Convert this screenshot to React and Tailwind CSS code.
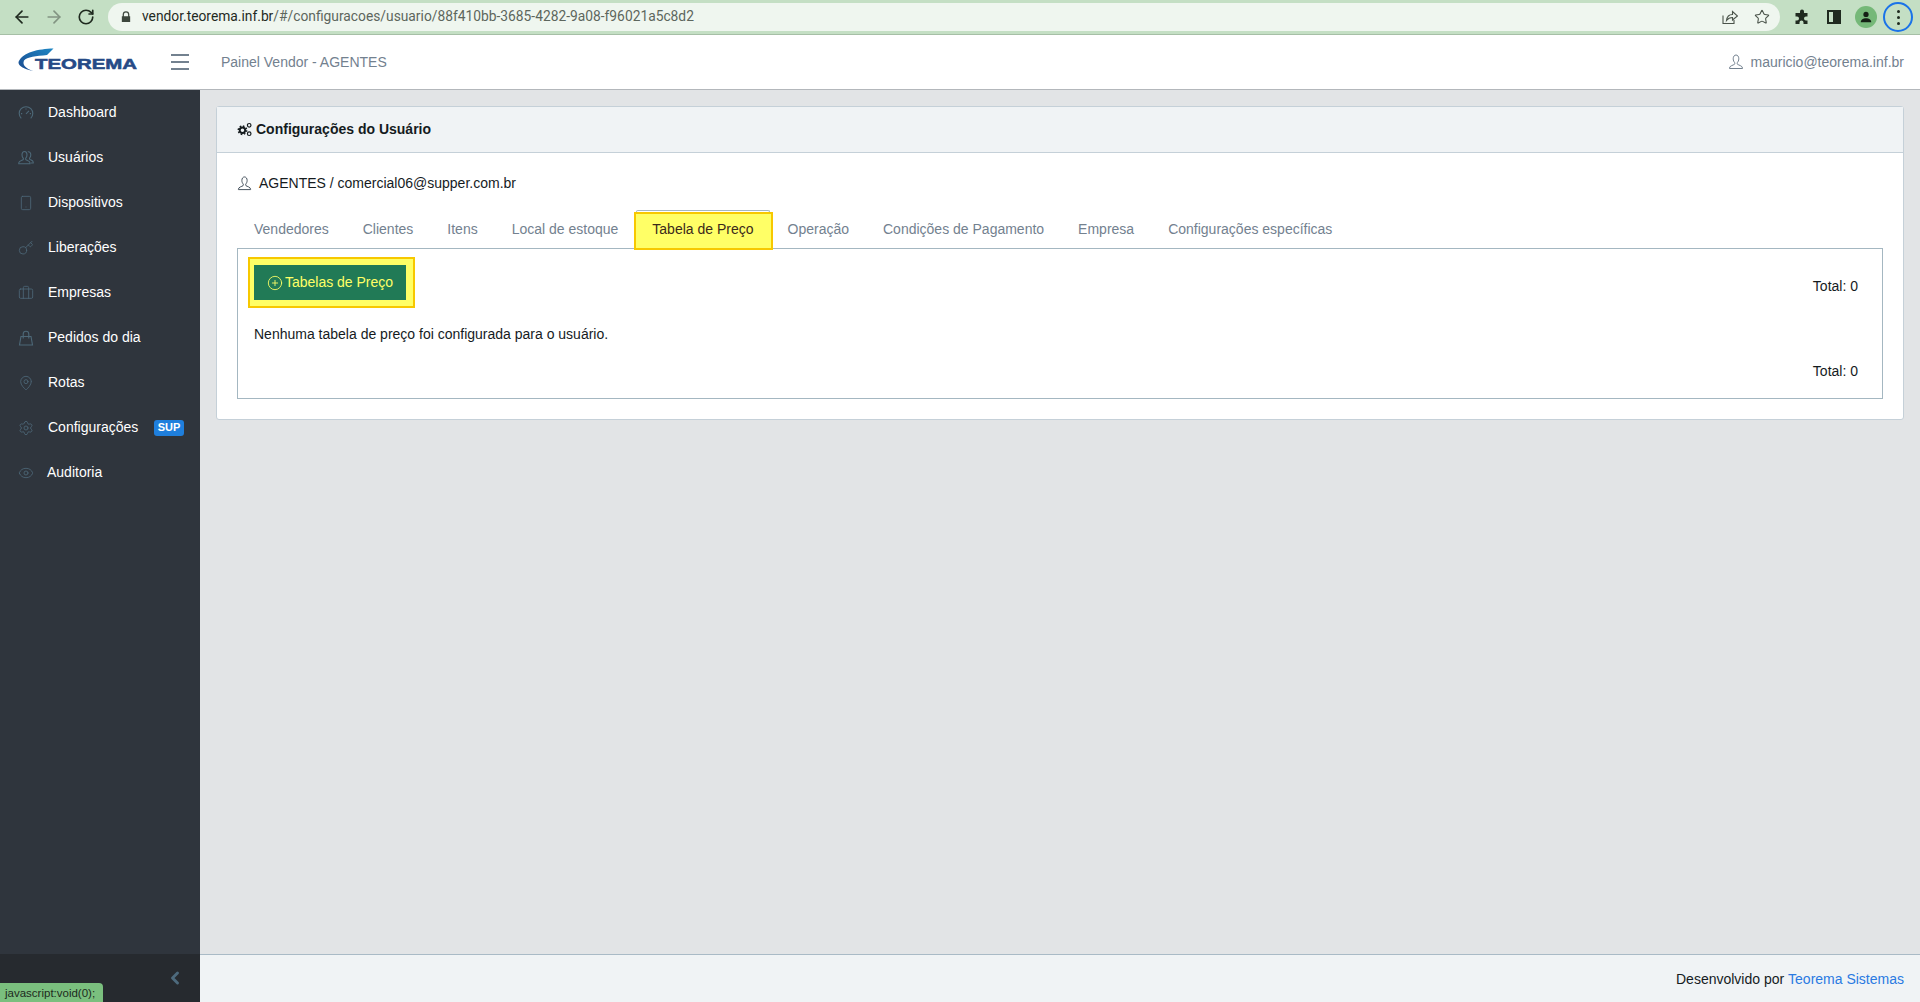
import { ArrowLeft, ArrowRight, RotateCw, Star, ChevronLeft, CirclePlus, Smartphone, Key, Briefcase, MapPin, Settings, Eye } from "lucide-react";

const UserLine = ({ className }) => (
  <svg viewBox="0 0 16 16" fill="none" stroke="currentColor" strokeWidth="1" className={className}>
    <path d="M5.2 4.8C5.2 2.6 6.3 1 8 1s2.8 1.6 2.8 3.8c0 1.6-.7 3-1.4 3.7-.3.3-.3 1.5.2 1.9.9.6 4.9 1.5 4.9 3.6v.5H1.5V14c0-2.1 4-3 4.9-3.6.5-.4.5-1.6.2-1.9-.7-.7-1.4-2.1-1.4-3.7z" />
  </svg>
);

const PeopleLine = ({ className }) => (
  <svg viewBox="0 0 16 16" fill="none" stroke="currentColor" strokeWidth="1.1" className={className}>
    <path d="M4 4.8C4 2.7 5 1.5 6.5 1.5S9 2.7 9 4.8c0 1.5-.6 2.7-1.2 3.3-.3.3-.2 1.3.2 1.7.8.6 4 1.2 4 3v1H.8v-1c0-1.8 3.3-2.4 4.2-3 .4-.4.5-1.400.2-1.700C4.600 7.500 4 6.300 4 4.800z" />
    <path d="M9.800 1.800c1.600-.5 3 .8 3 3 0 1.400-.5 2.500-1.100 3.100-.3.300-.2 1.200.2 1.500.7.500 3.300 1 3.300 2.700v.9h-2.200" />
  </svg>
);

const GaugeLine = ({ className }) => (
  <svg viewBox="0 0 16 16" fill="none" stroke="currentColor" strokeWidth="1.1" className={className}>
    <path d="M3.300 13.400A6.800 6.800 0 1 1 12.700 13.400" />
    <path d="M8 8.800L11 5.800" />
    <path d="M8 3.400V4.600M3 8.600H4.200M11.800 8.600H13" />
  </svg>
);

const BagLine = ({ className }) => (
  <svg viewBox="0 0 16 16" fill="none" stroke="currentColor" strokeWidth="1.1" className={className}>
    <path d="M3 6.500H13L14.500 15H1.500Z" />
    <path d="M5.200 8.500V4a2.800 2.800 0 0 1 5.600 0V8.500" />
  </svg>
);

const Cogs = ({ className }) => (
  <svg viewBox="0 0 16 16" className={className} fill="none" stroke="currentColor">
    <circle cx="5.8" cy="8.8" r="2.9" strokeWidth="2" />
    <circle cx="5.8" cy="8.8" r="4.4" strokeWidth="1.7" strokeDasharray="1.7 1.75" />
    <circle cx="13" cy="3.5" r="1.9" strokeWidth="1.3" />
    <circle cx="13" cy="12.5" r="1.9" strokeWidth="1.3" />
  </svg>
);

const Logo = () => (
  <svg viewBox="0 0 122 26" className="w-[122px] h-[26px]">
    <defs>
      <linearGradient id="swoosh" x1="0" y1="1" x2="1" y2="0">
        <stop offset="0" stopColor="#1b4a8f" />
        <stop offset="1" stopColor="#1c86c4" />
      </linearGradient>
    </defs>
    <path d="M35.5 .5C20 1 5 4 .5 14C0 18 7 21.5 15 23C8 20.5 4 17 6 12.5C9 9 18 8 29 7Z" fill="url(#swoosh)" />
    <text x="17" y="21" textLength="102" lengthAdjust="spacingAndGlyphs" fontFamily="Liberation Sans, sans-serif" fontWeight="700" fontSize="14" fill="#264a86" stroke="#264a86" strokeWidth="0.5">TEOREMA</text>
  </svg>
);

const navItems = [
  { label: "Dashboard", icon: <GaugeLine className="w-[16px] h-[16px]" /> },
  { label: "Usuários", icon: <PeopleLine className="w-[16px] h-[16px]" /> },
  { label: "Dispositivos", icon: <Smartphone size={16} strokeWidth={1.25} /> },
  { label: "Liberações", icon: <Key size={16} strokeWidth={1.25} /> },
  { label: "Empresas", icon: <Briefcase size={16} strokeWidth={1.25} /> },
  { label: "Pedidos do dia", icon: <BagLine className="w-[16px] h-[16px]" /> },
  { label: "Rotas", icon: <MapPin size={16} strokeWidth={1.25} /> },
  { label: "Configurações", icon: <Settings size={16} strokeWidth={1.25} />, badge: "SUP" },
  { label: "Auditoria", icon: <Eye size={16} strokeWidth={1.25} />, tight: true },
];

const tabs = ["Vendedores", "Clientes", "Itens", "Local de estoque", "Tabela de Preço", "Operação", "Condições de Pagamento", "Empresa", "Configurações específicas"];

const BrowserBar = () => (
  <div className="h-[35px] shrink-0 bg-[#c4dfc4] border-b border-[#a6bfa6] flex items-center font-['Roboto',sans-serif]">
    <div className="w-[108px] shrink-0 flex items-center pl-[6px] text-[#1f2a1f]">
      <span className="w-[32px] flex justify-center"><ArrowLeft size={20} strokeWidth={2} /></span>
      <span className="w-[32px] flex justify-center"><ArrowRight size={20} strokeWidth={2} className="text-[#829482]" /></span>
      <span className="w-[32px] flex justify-center"><RotateCw size={18} strokeWidth={2.2} /></span>
    </div>
    <div className="w-[1672px] h-[28px] mb-px rounded-full bg-[#eff6ef] flex items-center pl-[13px] pr-[2px]">
      <svg viewBox="0 0 12 14" className="w-[10px] h-[12px] shrink-0" fill="#3c463c">
        <path d="M2 6V4a4 4 0 0 1 8 0v2h1v7H1V6zm1.5 0h5V4a2.5 2.5 0 0 0-5 0z" />
      </svg>
      <span className="ml-[11px] text-[13.8px] text-[#1f2a1f]">vendor.teorema.inf.br<span className="text-[#5d665d]">/#/configuracoes/usuario/88f410bb-3685-4282-9a08-f96021a5c8d2</span></span>
      <div className="ml-auto flex items-center text-[#4a534a]">
        <span className="w-[32px] flex justify-center">
          <svg viewBox="0 0 16 16" fill="none" stroke="currentColor" strokeWidth="1.1" className="w-[16px] h-[16px]">
            <path d="M1 6.5V14.500H12V11" />
            <path d="M4.500 11.500C5 7.500 7.500 5.500 10.500 5.500V2.500L15.500 7L10.500 11V8.500C8 8.500 6 9.500 4.500 11.500z" />
          </svg>
        </span>
        <span className="w-[32px] flex justify-center"><Star size={16} strokeWidth={1.6} /></span>
      </div>
    </div>
    <div className="flex-1 flex items-center pl-[6px]">
      <span className="w-[32px] flex justify-center">
        <svg viewBox="0 0 16 16" className="w-[16px] h-[16px]" fill="#1f2a1f">
          <path d="M6 2.500a2 2 0 0 1 4 0V4h3.500v3.500H12a2 2 0 0 0 0 4h1.500V15H9.500v-1.500a2 2 0 0 0-4 0V15H1.500v-3.500H3a2 2 0 0 0 0-4H1.500V4H6z" />
        </svg>
      </span>
      <span className="w-[32px] flex justify-center">
        <span className="w-[14px] h-[14px] border-2 border-[#1f2a1f] flex justify-end">
          <span className="w-[6px] bg-[#1f2a1f]" />
        </span>
      </span>
      <span className="w-[32px] flex justify-center">
        <span className="w-[22px] h-[22px] rounded-full bg-[#75b878] flex items-center justify-center">
          <svg viewBox="0 0 16 16" className="w-[14px] h-[14px]" fill="#142014">
            <circle cx="8" cy="5" r="3" />
            <path d="M2 14c0-3 3-4.500 6-4.500s6 1.500 6 4.500z" />
          </svg>
        </span>
      </span>
      <span className="w-[32px] flex justify-center">
        <span className="w-[30px] h-[30px] rounded-full border-2 border-[#1a73e8] flex flex-col items-center justify-center gap-[3px]">
          <span className="w-[3px] h-[3px] rounded-full bg-[#1f2a1f]" />
          <span className="w-[3px] h-[3px] rounded-full bg-[#1f2a1f]" />
          <span className="w-[3px] h-[3px] rounded-full bg-[#1f2a1f]" />
        </span>
      </span>
    </div>
  </div>
);

const Header = () => (
  <header className="h-[55px] shrink-0 bg-white border-b border-[#b3b7bb] flex items-center text-[14px] text-[#73818f]">
    <div className="w-[171px] shrink-0 pl-[18px] pb-[2px]">
      <Logo />
    </div>
    <div className="w-[18px] flex flex-col gap-[5px]">
      <span className="h-[2px] bg-[#73818f]" />
      <span className="h-[2px] bg-[#73818f]" />
      <span className="h-[2px] bg-[#73818f]" />
    </div>
    <span className="ml-[32px]">Painel Vendor - AGENTES</span>
    <div className="ml-auto pr-[16px] flex items-center">
      <UserLine className="w-[16px] h-[16px] mr-[7px]" />
      <span>mauricio@teorema.inf.br</span>
    </div>
  </header>
);

const Sidebar = () => (
  <aside className="w-[200px] shrink-0 bg-[#2f353d] flex flex-col relative">
    <nav className="flex-1">
      {navItems.map((item) => (
        <div key={item.label} className="h-[45px] flex items-center pl-[18px] text-[14px] text-white">
          <span className={`${item.tight ? "w-[29px]" : "w-[30px]"} text-[#4d6878] flex`}>{item.icon}</span>
          <span>{item.label}</span>
          {item.badge && (
            <span className="ml-auto mr-[16px] w-[30px] h-[16px] rounded-[3px] bg-[#1f7fdd] text-[11px] font-bold flex items-center justify-center">{item.badge}</span>
          )}
        </div>
      ))}
    </nav>
    <div className="h-[48px] bg-[#262a2f] flex items-center justify-end pr-[15px]">
      <ChevronLeft size={20} strokeWidth={3.5} className="text-[#4d6a7d]" />
    </div>
    <div className="absolute left-0 bottom-0 w-[103px] h-[19px] bg-[#7abf7e] rounded-tr-[4px] text-[11.5px] leading-[19px] pl-[5px] pt-[1px] text-[#1d2a1d]">javascript:void(0);</div>
  </aside>
);

const Card = () => (
  <div className="mx-[16px] mt-[16px] bg-white border border-[#c5d0d8] rounded-[3px]">
    <div className="h-[46px] bg-[#f0f3f5] border-b border-[#c5d0d8] flex items-center pl-[20px] text-[14px] font-bold text-[#151b1e]">
      <Cogs className="w-[15px] h-[15px] mr-[4px]" />
      <span>Configurações do Usuário</span>
    </div>
    <div className="px-[20px] pt-[20px] pb-[20px] text-[14px] text-[#151b1e]">
      <div className="h-[21px] flex items-center">
        <UserLine className="w-[15px] h-[15px] mr-[7px] text-[#3d4a55]" />
        <span>AGENTES / comercial06@supper.com.br</span>
      </div>
      <div className="mt-[16px] flex h-[38px] items-end">
        {tabs.map((tab) =>
          tab === "Tabela de Preço" ? (
            <div key={tab} className="relative h-[40px] mb-[-2px]">
              <div className="h-[2px] mx-[1px] border-t border-x border-[#a4b7c1] rounded-t-[3px]" />
              <div className="h-[38px] ml-[-1px] mr-[-2px] pl-[16px] pr-[17px] pb-[4px] bg-[#ffff66] border-2 border-[#f7c800] text-[#3b2a1a] flex items-center">{tab}</div>
            </div>
          ) : (
            <span key={tab} className="h-[38px] px-[17px] text-[#73818f] flex items-center">{tab}</span>
          )
        )}
      </div>
      <div className="border border-[#a4b7c1] pt-[8px] pl-[10px] pr-[24px] pb-[16px]">
        <div className="flex justify-between items-start">
          <div className="border-2 border-[#f7c800] bg-[#ffff66] pl-[4px] pr-[7px] py-[6px]">
            <button className="w-[152px] h-[35px] bg-[#217a56] text-[#ffff66] flex items-center justify-center gap-[2px]">
              <CirclePlus size={16} strokeWidth={1.3} />
              Tabelas de Preço
            </button>
          </div>
          <span className="mt-[19px] leading-[21px]">Total: 0</span>
        </div>
        <p className="mt-[16px] ml-[6px] leading-[21px]">Nenhuma tabela de preço foi configurada para o usuário.</p>
        <div className="mt-[16px] text-right leading-[21px]">Total: 0</div>
      </div>
    </div>
  </div>
);

export default function App() {
  return (
    <div className="h-screen flex flex-col overflow-hidden font-['Liberation_Sans',Arial,sans-serif] bg-[#e2e4e6]">
      <BrowserBar />
      <Header />
      <div className="flex-1 flex min-h-0">
        <Sidebar />
        <main className="flex-1 flex flex-col min-w-0">
          <div className="flex-1">
            <Card />
          </div>
          <footer className="h-[48px] shrink-0 bg-[#f0f3f5] border-t border-[#a9bac6] flex items-center justify-end pr-[16px] pt-[1px] text-[14px] text-[#151b1e]">
            Desenvolvido por&nbsp;<span className="text-[#2a7ae2]">Teorema Sistemas</span>
          </footer>
        </main>
      </div>
    </div>
  );
}
